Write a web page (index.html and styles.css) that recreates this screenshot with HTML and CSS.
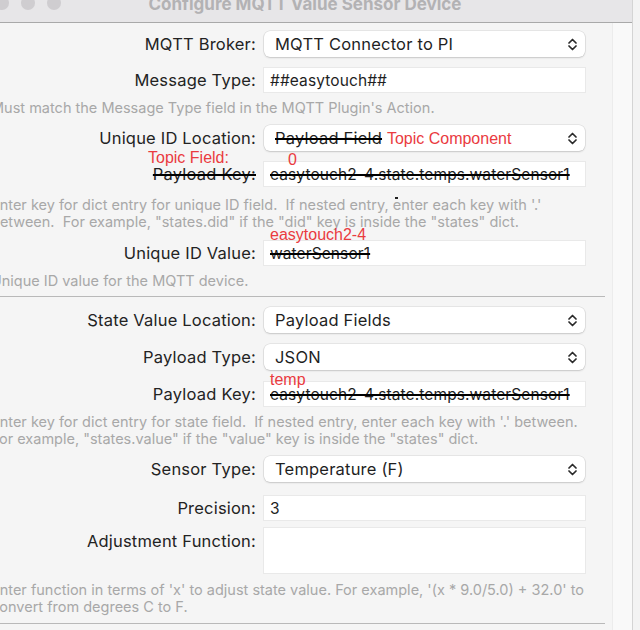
FILE: index.html
```html
<!DOCTYPE html>
<html lang="en">
  <head>
    <meta charset="UTF-8" />
    <meta name="viewport" content="width=device-width, initial-scale=1.0" />
    <title>Configure MQTT Value Sensor Device</title>
    <link rel="stylesheet" href="styles.css">
  </head>
  <body>
    <div class="window">
      <div class="titlebar">
        <div class="lights"><span></span><span></span><span></span></div>
        <div class="title">Configure MQTT Value Sensor Device</div>
      </div>

      <div class="content">
        <div class="sheet">
          <div class="row first">
            <label>MQTT Broker:</label>
            <div class="popup">MQTT Connector to PI
              <svg class="chevron" viewBox="0 0 9 13"><path d="M1 5 4.5 1.5 8 5M1 8 4.5 11.5 8 8"/></svg>
            </div>
          </div>
          <div class="row gap-field">
            <label>Message Type:</label>
            <div class="field">##easytouch##</div>
          </div>
          <p class="help">Must match the Message Type field in the MQTT Plugin's Action.</p>

          <div class="row gap-help">
            <label>Unique ID Location:</label>
            <div class="popup"><s>Payload Field</s>&nbsp;<span class="red">Topic Component</span>
              <svg class="chevron" viewBox="0 0 9 13"><path d="M1 5 4.5 1.5 8 5M1 8 4.5 11.5 8 8"/></svg>
            </div>
          </div>
          <div class="row gap-field">
            <label><span class="note note-label">Topic Field:</span><s>Payload Key:</s></label>
            <div class="field">
              <span class="note note-zero">0</span>
              <s>easytouch2-4.state.temps.waterSensor1</s>
              <span class="tick"></span>
            </div>
          </div>
          <p class="help help-gap">Enter key for dict entry for unique ID field.&nbsp; If nested entry, enter each key with '.'<br>between.&nbsp; For example, "states.did" if the "did" key is inside the "states" dict.</p>

          <div class="row gap-field">
            <label>Unique ID Value:</label>
            <div class="field">
              <span class="note note-value">easytouch2-4</span>
              <s>waterSensor1</s>
            </div>
          </div>
          <p class="help">Unique ID value for the MQTT device.</p>

          <hr class="separator">

          <div class="row gap-rule">
            <label>State Value Location:</label>
            <div class="popup">Payload Fields
              <svg class="chevron" viewBox="0 0 9 13"><path d="M1 5 4.5 1.5 8 5M1 8 4.5 11.5 8 8"/></svg>
            </div>
          </div>
          <div class="row gap-field">
            <label>Payload Type:</label>
            <div class="popup">JSON
              <svg class="chevron" viewBox="0 0 9 13"><path d="M1 5 4.5 1.5 8 5M1 8 4.5 11.5 8 8"/></svg>
            </div>
          </div>
          <div class="row gap-note">
            <label>Payload Key:</label>
            <div class="field">
              <span class="note note-temp">temp</span>
              <s>easytouch2-4.state.temps.waterSensor1</s>
            </div>
          </div>
          <p class="help">Enter key for dict entry for state field.&nbsp; If nested entry, enter each key with '.' between.<br>For example, "states.value" if the "value" key is inside the "states" dict.</p>

          <div class="row gap-help">
            <label>Sensor Type:</label>
            <div class="popup">Temperature (F)
              <svg class="chevron" viewBox="0 0 9 13"><path d="M1 5 4.5 1.5 8 5M1 8 4.5 11.5 8 8"/></svg>
            </div>
          </div>
          <div class="row gap-wide">
            <label>Precision:</label>
            <div class="field">3</div>
          </div>
          <div class="row gap-area top">
            <label>Adjustment Function:</label>
            <div class="field area"></div>
          </div>
          <p class="help help-end">Enter function in terms of 'x' to adjust state value. For example, '(x * 9.0/5.0) + 32.0' to<br>convert from degrees C to F.</p>

          <hr class="separator last">
        </div>
        <div class="rail"></div>
      </div>
    </div>
  </body>
</html>
```

FILE: styles.css
```css
body{
  margin: 0;
  background: #f3f3f3;
  font-family: Inter, "Liberation Sans", sans-serif;
  overflow: hidden;
}
.window{
  width: 632px;
  height: 630px;
  border-right: 1px solid #d4d4d4;
  background: #f5f5f5;
}
.titlebar{
  position: relative;
  margin-left: -22px;
  width: 654px;
  height: 22px;
  background: #e7e6e8;
  border-bottom: 1px solid #a9a9a9;
  overflow: hidden;
}
.lights{
  display: flex;
  gap: 12px;
  padding: 0 0 0 17px;
  margin-top: -4px;
}
.lights span{
  width: 14px;
  height: 14px;
  border-radius: 50%;
  background: #cfcdd0;
}
.title{
  position: absolute;
  left: 0;
  right: 0;
  top: -6px;
  text-align: center;
  font-size: 17px;
  font-weight: bold;
  color: #b3b2b4;
}

.content{
  display: flex;
  height: 607px;
}
.sheet{
  width: 612px;
}
.rail{
  flex: 1;
  background: #f9f9f9;
  border-left: 1px solid #ececec;
}

.row{
  display: grid;
  grid-template-columns: 256px 321px;
  column-gap: 8px;
  align-items: center;
}
.row.top{
  align-items: start;
}
.row label{
  position: relative;
  text-align: right;
  font-size: 16.5px;
  letter-spacing: 0.2px;
  color: #232323;
  white-space: nowrap;
}
.row.top label{
  padding-top: 3px;
}
.first{ margin-top: 8px; }
.gap-field{ margin-top: 11px; }
.gap-help{ margin-top: 9px; }
.gap-rule{ margin-top: 10px; }
.gap-note{ margin-top: 12px; }
.gap-wide{ margin-top: 14px; }
.gap-area{ margin-top: 8px; }

.popup{
  position: relative;
  height: 26px;
  line-height: 26px;
  padding: 0 11px;
  background: #fff;
  border-radius: 6px;
  box-shadow: 0 0 0 0.5px rgba(0,0,0,0.12), 0 1px 2px rgba(0,0,0,0.14);
  font-size: 16.5px;
  letter-spacing: 0.2px;
  color: #1f1f1f;
  white-space: nowrap;
}
.chevron{
  position: absolute;
  right: 8px;
  top: 7px;
  width: 9px;
  height: 13px;
  fill: none;
  stroke: #2a2a2a;
  stroke-width: 1.7;
  stroke-linecap: round;
  stroke-linejoin: round;
}
.field{
  position: relative;
  height: 24px;
  line-height: 25px;
  padding: 0 6px;
  background: #fff;
  box-shadow: 0 0 0 1px #e9e9e9, 0 1px 0 #dadada;
  font-size: 15.5px;
  letter-spacing: 0.1px;
  color: #1f1f1f;
  white-space: nowrap;
}
.field.area{
  height: 45px;
}

s{
  text-decoration-thickness: 2px;
  text-decoration-color: #000;
}
/* the red notes are hand-written over the form */
.red,
.note{
  font-family: "Liberation Sans", Arial, sans-serif;
  font-size: 16px;
  letter-spacing: 0;
  color: #ea3b3f;
}
.note{
  position: absolute;
  line-height: 16px;
}
.note-label{
  left: 148px;
  top: -14px;
}
.note-zero{
  left: 24px;
  top: -10px;
}
.note-value{
  left: 6px;
  top: -14px;
}
.note-temp{
  left: 6px;
  top: -10px;
}
.tick{
  position: absolute;
  left: 131px;
  top: 35px;
  width: 3px;
  height: 2px;
  background: #222;
}

.help{
  margin: 7px 0 0 -9px;
  font-size: 14.5px;
  line-height: 17px;
  color: #a8a8a8;
  white-space: nowrap;
}
.help-gap{
  margin-top: 10px;
}
.help-end{
  margin-top: 8px;
}

.separator{
  margin: 7px 0 0;
  width: 605px;
  border: 0;
  border-top: 1px solid #b9b9b9;
}
.separator.last{
  margin-top: 8px;
}
```
